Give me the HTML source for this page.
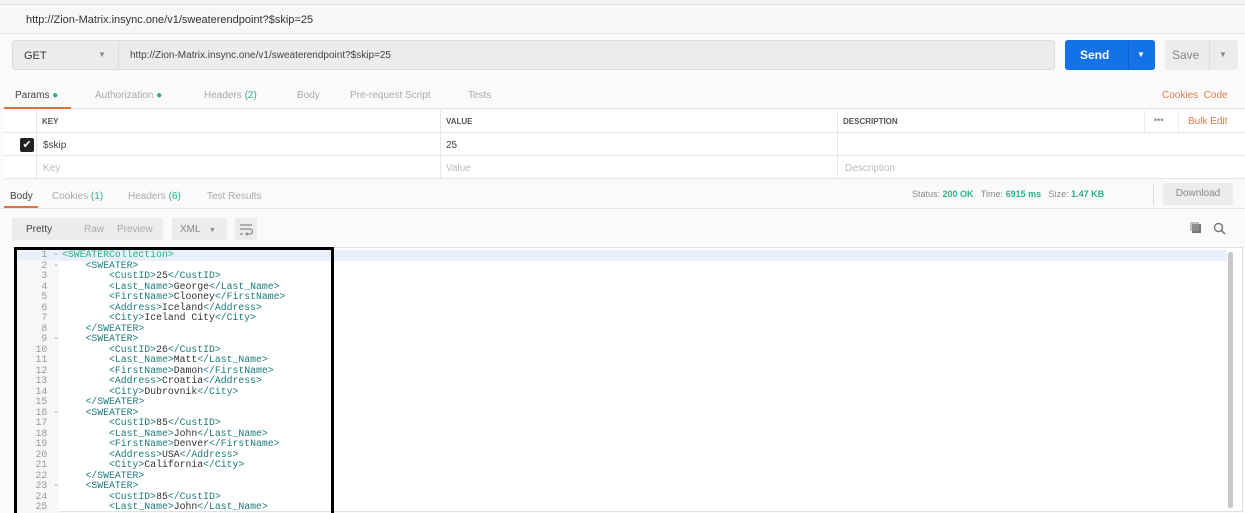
<!DOCTYPE html>
<html><head><style>
*{margin:0;padding:0;box-sizing:border-box}
body{width:1245px;height:513px;overflow:hidden;background:#fafafa;font-family:"Liberation Sans",sans-serif;font-size:11px;color:#505050;position:relative}
.a{position:absolute}
.g{color:#26b47f}
.code{font-family:"Liberation Mono",monospace;font-size:9.8px;line-height:10.52px;white-space:pre;color:#1c7a7a}
.num{font-family:"Liberation Mono",monospace;font-size:9.8px;line-height:10.52px;white-space:pre;color:#999;text-align:right}
.t{color:#333}
</style></head><body>
<div class="a" style="left:0;top:0;width:1245px;height:5px;background:#f3f3f3;border-bottom:1px solid #e2e2e2"></div>
<div class="a" style="left:0;top:5px;width:1245px;height:29px;background:#f7f7f7;border-bottom:1px solid #e6e6e6"></div>
<div class="a" style="left:26px;top:14px;font-size:11px;color:#333">http://Zion-Matrix.insync.one/v1/sweaterendpoint?$skip=25</div>
<div class="a" style="left:12px;top:40px;width:1043px;height:30px;background:#ececec;border:1px solid #dcdcdc;border-radius:3px"></div>
<div class="a" style="left:118px;top:41px;width:1px;height:28px;background:#dcdcdc"></div>
<div class="a" style="left:24px;top:50px;font-size:11px;color:#333">GET</div>
<div class="a" style="left:98px;top:50px;font-size:8px;color:#888">▼</div>
<div class="a" style="left:130px;top:50px;font-size:10px;color:#444">http://Zion-Matrix.insync.one/v1/sweaterendpoint?$skip=25</div>
<div class="a" style="left:1065px;top:40px;width:90px;height:30px;background:#1372e6;border-radius:3px"></div>
<div class="a" style="left:1128px;top:41px;width:1px;height:28px;background:#0d62c8"></div>
<div class="a" style="left:1080px;top:48px;font-size:12px;color:#fff;font-weight:bold">Send</div>
<div class="a" style="left:1137px;top:50px;font-size:8px;color:#fff">▼</div>
<div class="a" style="left:1165px;top:40px;width:73px;height:30px;background:#ececec;border-radius:3px"></div>
<div class="a" style="left:1209px;top:40px;width:1px;height:30px;background:#dcdcdc"></div>
<div class="a" style="left:1172px;top:48px;font-size:12px;color:#888">Save</div>
<div class="a" style="left:1219px;top:50px;font-size:8px;color:#888">▼</div>
<div class="a" style="left:0;top:79px;width:1245px;height:30px;border-bottom:1px solid #e6e6e6"></div>
<div class="a" style="left:15px;top:90px;color:#444;font-size:10px">Params <span class="g">●</span></div>
<div class="a" style="left:95px;top:90px;color:#aaa;font-size:10px">Authorization <span class="g">●</span></div>
<div class="a" style="left:204px;top:90px;color:#aaa;font-size:10px">Headers <span class="g">(2)</span></div>
<div class="a" style="left:297px;top:90px;color:#aaa;font-size:10px">Body</div>
<div class="a" style="left:350px;top:90px;color:#aaa;font-size:10px">Pre-request Script</div>
<div class="a" style="left:468px;top:90px;color:#aaa;font-size:10px">Tests</div>
<div class="a" style="left:1162px;top:90px;font-size:10px;color:#e07b4a">Cookies&nbsp; Code</div>
<div class="a" style="left:4px;top:107px;width:67px;height:2px;background:#e0703f"></div>
<div class="a" style="left:4px;top:110px;width:1241px;height:69px;background:#fff"></div>
<div class="a" style="left:4px;top:132px;width:1241px;height:1px;background:#e6e6e6"></div>
<div class="a" style="left:4px;top:155px;width:1241px;height:1px;background:#e6e6e6"></div>
<div class="a" style="left:4px;top:178px;width:1241px;height:1px;background:#e6e6e6"></div>
<div class="a" style="left:36px;top:110px;width:1px;height:69px;background:#e6e6e6"></div>
<div class="a" style="left:440px;top:110px;width:1px;height:69px;background:#e6e6e6"></div>
<div class="a" style="left:837px;top:110px;width:1px;height:69px;background:#e6e6e6"></div>
<div class="a" style="left:1144px;top:110px;width:1px;height:22px;background:#eee"></div>
<div class="a" style="left:1178px;top:110px;width:1px;height:22px;background:#eee"></div>
<div class="a" style="left:42px;top:117px;font-size:8px;color:#555;font-weight:bold">KEY</div>
<div class="a" style="left:446px;top:117px;font-size:8px;color:#555;font-weight:bold">VALUE</div>
<div class="a" style="left:843px;top:117px;font-size:8px;color:#555;font-weight:bold">DESCRIPTION</div>
<div class="a" style="left:1154px;top:115px;font-size:9px;color:#888">•••</div>
<div class="a" style="left:1188px;top:116px;font-size:10px;color:#e07b4a">Bulk Edit</div>
<div class="a" style="left:20px;top:138px;width:14px;height:14px;background:#222;border-radius:2px;color:#fff;font-size:11px;line-height:14px;text-align:center">✔</div>
<div class="a" style="left:43px;top:140px;font-size:10px;color:#444">$skip</div>
<div class="a" style="left:446px;top:140px;font-size:10px;color:#444">25</div>
<div class="a" style="left:43px;top:163px;font-size:10px;color:#bbb">Key</div>
<div class="a" style="left:446px;top:163px;font-size:10px;color:#bbb">Value</div>
<div class="a" style="left:845px;top:163px;font-size:10px;color:#bbb">Description</div>
<div class="a" style="left:0;top:208px;width:1245px;height:1px;background:#e6e6e6"></div>
<div class="a" style="left:10px;top:191px;font-size:10px;color:#444">Body</div>
<div class="a" style="left:52px;top:191px;font-size:10px;color:#aaa">Cookies <span class="g">(1)</span></div>
<div class="a" style="left:128px;top:191px;font-size:10px;color:#aaa">Headers <span class="g">(6)</span></div>
<div class="a" style="left:207px;top:191px;font-size:10px;color:#aaa">Test Results</div>
<div class="a" style="left:4px;top:206px;width:34px;height:2px;background:#e0703f"></div>
<div class="a" style="left:912px;top:189px;font-size:9px;color:#888">Status: <b class="g">200 OK</b>&nbsp;&nbsp; Time: <b class="g">6915 ms</b>&nbsp;&nbsp; Size: <b class="g">1.47 KB</b></div>
<div class="a" style="left:1153px;top:184px;width:1px;height:22px;background:#ddd"></div>
<div class="a" style="left:1163px;top:183px;width:70px;height:22px;background:#ececec;border-radius:2px;color:#888;font-size:10px;text-align:center;line-height:22px">Download</div>
<div class="a" style="left:12px;top:218px;width:151px;height:22px;background:#ececec;border-radius:2px"></div>
<div class="a" style="left:26px;top:224px;font-size:10px;color:#444">Pretty</div>
<div class="a" style="left:84px;top:224px;font-size:10px;color:#aaa">Raw</div>
<div class="a" style="left:117px;top:224px;font-size:10px;color:#aaa">Preview</div>
<div class="a" style="left:172px;top:218px;width:55px;height:22px;background:#ececec;border-radius:2px"></div>
<div class="a" style="left:180px;top:224px;font-size:10px;color:#888">XML&nbsp;&nbsp;&nbsp;<span style="font-size:7px">▼</span></div>
<div class="a" style="left:235px;top:218px;width:22px;height:22px;background:#ececec;border-radius:2px"></div>
<svg class="a" style="left:239px;top:222px" width="14" height="14"><path d="M1 3H13M1 7H11a2.5 2.5 0 0 1 0 5H7M8.5 10.5L7 12l1.5 1.5M1 12H4" fill="none" stroke="#888" stroke-width="1.2"/></svg>
<div class="a" style="left:1192px;top:224px;width:9px;height:9px;background:#777"></div>
<div class="a" style="left:1190px;top:222px;width:9px;height:9px;background:#999;opacity:.6"></div>
<svg class="a" style="left:1213px;top:222px" width="14" height="14"><circle cx="5.5" cy="5.5" r="4" fill="none" stroke="#777" stroke-width="1.4"/><path d="M8.5 8.5L12 12" stroke="#777" stroke-width="1.5"/></svg>
<div class="a" style="left:14px;top:247px;width:1229px;height:265px;background:#fff;border:1px solid #e0e0e0;overflow:hidden">
  <div class="a" style="left:0;top:2px;width:1212px;height:11px;background:#e8f0fb"></div>
  <div class="a" style="left:1213px;top:4px;width:5px;height:256px;background:#c8c8c8;border-radius:2px"></div>
</div>
<div class="a" style="left:14px;top:247px;width:320px;height:266px;border:3px solid #000;border-bottom:none;overflow:hidden">
  <div class="a" style="left:0;top:0;width:42px;height:266px;background:#f7f7f7"></div>
  <div class="a" style="left:0;top:1px;width:314px;height:9px;background:#e8f0fb"></div>
  <div class="a num" style="left:0;top:0px;width:42px">1 -
2 -
3  
4  
5  
6  
7  
8  
9 -
10  
11  
12  
13  
14  
15  
16 -
17  
18  
19  
20  
21  
22  
23 -
24  
25  </div>
  <div class="a code" style="left:45px;top:0px"><span class="g">&lt;SWEATERCollection&gt;</span>
    &lt;SWEATER&gt;
        &lt;CustID&gt;<span class="t">25</span>&lt;/CustID&gt;
        &lt;Last_Name&gt;<span class="t">George</span>&lt;/Last_Name&gt;
        &lt;FirstName&gt;<span class="t">Clooney</span>&lt;/FirstName&gt;
        &lt;Address&gt;<span class="t">Iceland</span>&lt;/Address&gt;
        &lt;City&gt;<span class="t">Iceland City</span>&lt;/City&gt;
    &lt;/SWEATER&gt;
    &lt;SWEATER&gt;
        &lt;CustID&gt;<span class="t">26</span>&lt;/CustID&gt;
        &lt;Last_Name&gt;<span class="t">Matt</span>&lt;/Last_Name&gt;
        &lt;FirstName&gt;<span class="t">Damon</span>&lt;/FirstName&gt;
        &lt;Address&gt;<span class="t">Croatia</span>&lt;/Address&gt;
        &lt;City&gt;<span class="t">Dubrovnik</span>&lt;/City&gt;
    &lt;/SWEATER&gt;
    &lt;SWEATER&gt;
        &lt;CustID&gt;<span class="t">85</span>&lt;/CustID&gt;
        &lt;Last_Name&gt;<span class="t">John</span>&lt;/Last_Name&gt;
        &lt;FirstName&gt;<span class="t">Denver</span>&lt;/FirstName&gt;
        &lt;Address&gt;<span class="t">USA</span>&lt;/Address&gt;
        &lt;City&gt;<span class="t">California</span>&lt;/City&gt;
    &lt;/SWEATER&gt;
    &lt;SWEATER&gt;
        &lt;CustID&gt;<span class="t">85</span>&lt;/CustID&gt;
        &lt;Last_Name&gt;<span class="t">John</span>&lt;/Last_Name&gt;</div>
</div>
</body></html>
